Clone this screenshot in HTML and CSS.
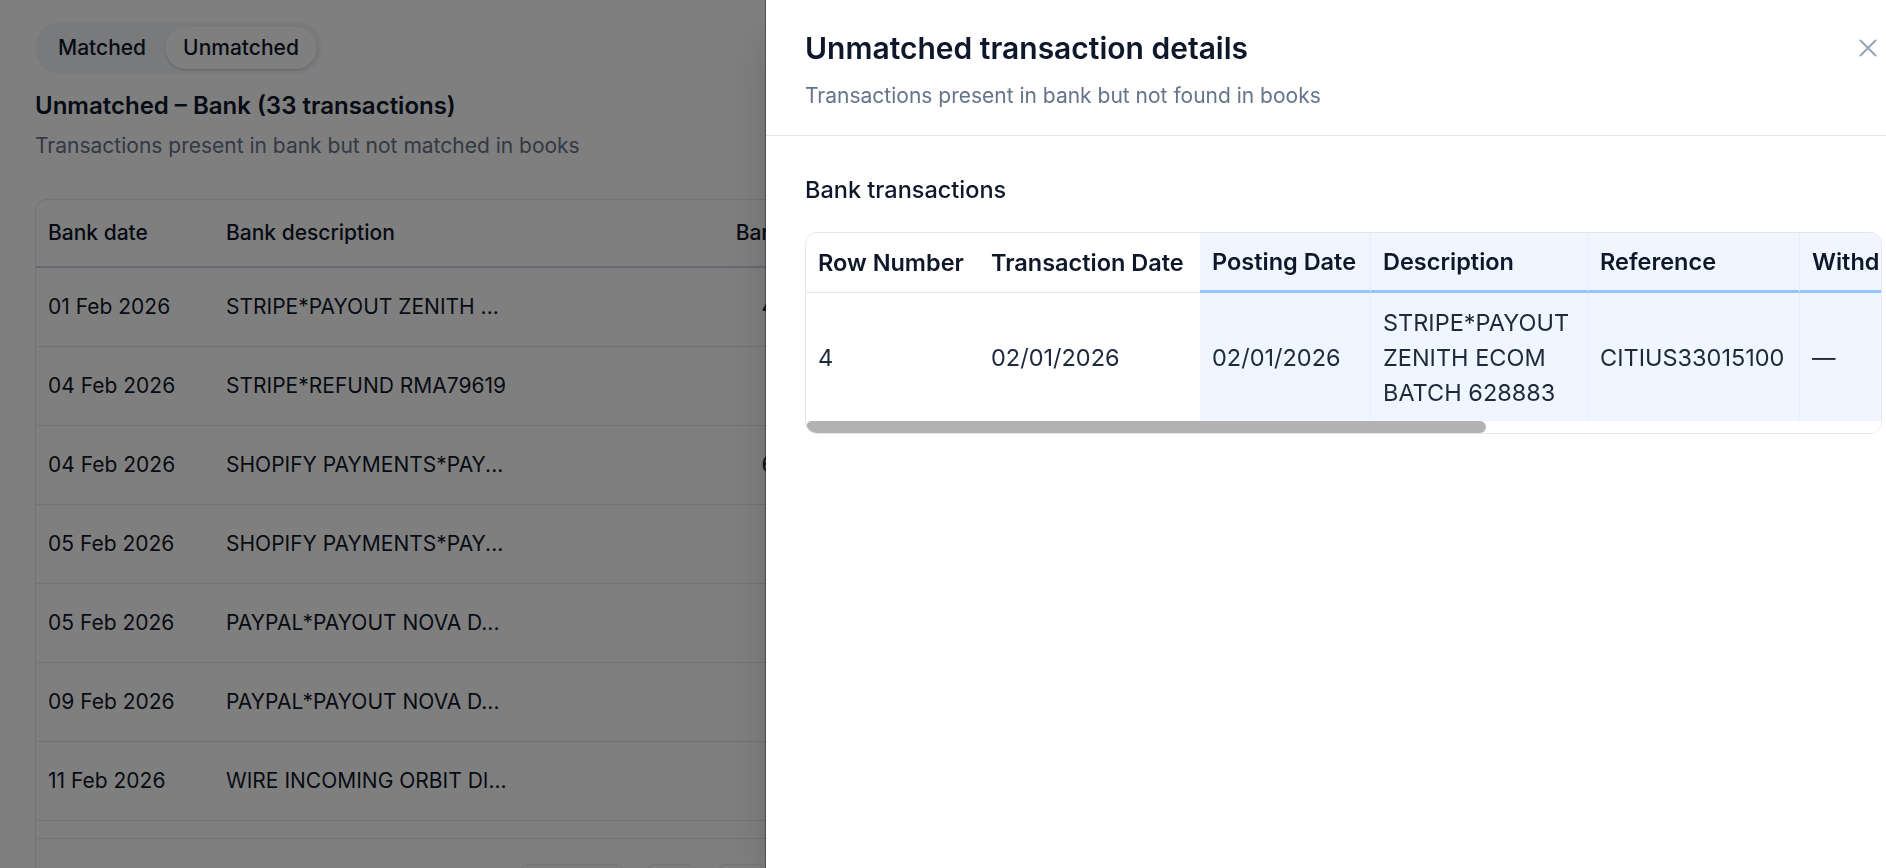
FILE: index.html
```html
<!DOCTYPE html>
<html lang="en">
<head>
<meta charset="utf-8">
<title>Reconciliation – Unmatched</title>
<link rel="stylesheet" href="styles.css">
</head>
<body>
<main class="page">
  <div class="toggle">
    <button class="toggle-btn">Matched</button>
    <button class="toggle-btn is-active">Unmatched</button>
  </div>
  <h2 class="section-title">Unmatched – Bank (33 transactions)</h2>
  <p class="section-sub">Transactions present in bank but not matched in books</p>

  <div class="card">
    <table class="list-table">
      <colgroup>
        <col class="c-date"><col class="c-desc"><col class="c-amt"><col class="c-rest"><col class="c-rest"><col class="c-rest">
      </colgroup>
      <thead>
        <tr><th>Bank date</th><th>Bank description</th><th class="num">Bank amount</th><th>Book date</th><th>Book description</th><th>Action</th></tr>
      </thead>
      <tbody>
        <tr><td>01 Feb 2026</td><td>STRIPE*PAYOUT ZENITH ...</td><td class="num amt">48,250.00</td><td>—</td><td>—</td><td>Match</td></tr>
        <tr><td>04 Feb 2026</td><td>STRIPE*REFUND RMA79619</td><td class="num amt">-850.00</td><td>—</td><td>—</td><td>Match</td></tr>
        <tr><td>04 Feb 2026</td><td>SHOPIFY PAYMENTS*PAY...</td><td class="num amt">63,480.50</td><td>—</td><td>—</td><td>Match</td></tr>
        <tr><td>05 Feb 2026</td><td>SHOPIFY PAYMENTS*PAY...</td><td class="num amt">3,420.75</td><td>—</td><td>—</td><td>Match</td></tr>
        <tr><td>05 Feb 2026</td><td>PAYPAL*PAYOUT NOVA D...</td><td class="num amt">2,150.00</td><td>—</td><td>—</td><td>Match</td></tr>
        <tr><td>09 Feb 2026</td><td>PAYPAL*PAYOUT NOVA D...</td><td class="num amt">980.40</td><td>—</td><td>—</td><td>Match</td></tr>
        <tr><td>11 Feb 2026</td><td>WIRE INCOMING ORBIT DI...</td><td class="num amt">18,400.00</td><td>—</td><td>—</td><td>Match</td></tr>
      </tbody>
    </table>
    <div class="list-track"></div>
    <div class="list-footer">
      <span class="list-spacer"></span>
      <button class="pg-btn pg-wide" aria-label="Previous page"></button>
      <button class="pg-btn" aria-label="Page 1"></button>
      <button class="pg-btn" aria-label="Page 2"></button>
    </div>
  </div>
</main>

<div class="overlay"></div>

<aside class="panel">
  <header class="panel-head">
    <div class="panel-titles">
      <h1 class="panel-title">Unmatched transaction details</h1>
      <p class="panel-sub">Transactions present in bank but not found in books</p>
    </div>
    <button class="close-btn" aria-label="Close">
      <svg width="18" height="18" viewBox="0 0 18 18" fill="none" stroke="currentColor" stroke-width="1.9" stroke-linecap="round"><path d="M1.5 1.5 16.5 16.5M16.5 1.5 1.5 16.5"/></svg>
    </button>
  </header>
  <div class="panel-body">
    <h3 class="block-title">Bank transactions</h3>
    <div class="detail-card">
      <div class="detail-scroll">
        <table class="detail-table">
          <colgroup>
            <col class="d1"><col class="d2"><col class="d3"><col class="d4"><col class="d5"><col class="d6"><col class="d7"><col class="d8"><col class="d9">
          </colgroup>
          <thead>
            <tr>
              <th>Row Number</th>
              <th>Transaction Date</th>
              <th class="hl hl-first">Posting Date</th>
              <th class="hl">Description</th>
              <th class="hl">Reference</th>
              <th class="hl">Withdrawal</th>
              <th class="hl">Deposit</th>
              <th>Balance</th>
              <th>Currency</th>
            </tr>
          </thead>
          <tbody>
            <tr>
              <td>4</td>
              <td>02/01/2026</td>
              <td class="hl hl-first">02/01/2026</td>
              <td class="hl wrap">STRIPE*PAYOUT ZENITH ECOM BATCH 628883</td>
              <td class="hl">CITIUS33015100</td>
              <td class="hl">—</td>
              <td class="hl">45,210.00</td>
              <td>182,340.12</td>
              <td>USD</td>
            </tr>
          </tbody>
        </table>
      </div>
      <div class="hscroll"><div class="hscroll-thumb"></div></div>
    </div>
  </div>
</aside>
</body>
</html>
```
FILE: styles.css
```css
html, body {
  margin: 0;
  height: 100%;
  overflow: hidden;
  background: #ffffff;
}
body {
  font-family: Inter, "Noto Sans", sans-serif;
  color: #0f172a;
}
button {
  font-family: inherit;
  border: 0;
  background: none;
  cursor: pointer;
}
h1, h2, h3, p { margin: 0; }

/* ---------- page underneath ---------- */
.page {
  padding: 22px 35px 0;
}
.toggle {
  display: inline-flex;
  gap: 1px;
  padding: 5px;
  background: #f1f5f9;
  border-radius: 26px;
}
.toggle-btn {
  font-size: 21px;
  font-weight: 500;
  line-height: 30px;
  padding: 6px 18px;
  border-radius: 999px;
  color: #0f172a;
}
.toggle-btn.is-active {
  background: #ffffff;
  box-shadow: 0 1px 3px rgba(15, 23, 42, 0.12), 0 1px 2px rgba(15, 23, 42, 0.08);
}
.section-title {
  margin-top: 16px;
  font-size: 24px;
  line-height: 32px;
  font-weight: 600;
  color: #0f172a;
}
.section-sub {
  margin-top: 9px;
  font-size: 21px;
  line-height: 30px;
  color: #64748b;
}
.card {
  margin-top: 38px;
  border: 1px solid #e5e7eb;
  border-radius: 12px;
  overflow: hidden;
  background: #ffffff;
}
.list-table {
  width: 100%;
  border-collapse: collapse;
  table-layout: fixed;
  font-size: 21px;
  line-height: 30px;
}
.c-date { width: 178px; }
.c-desc { width: 490px; }
.c-amt { width: 175px; }
.list-table th {
  text-align: left;
  font-weight: 500;
  padding: 18px 12px;
  border-bottom: 2px solid #cbd5e1;
  color: #0f172a;
  white-space: nowrap;
}
.list-table td {
  padding: 24px 12px;
  border-bottom: 1px solid #e5e7eb;
  color: #0f172a;
  white-space: nowrap;
  overflow: hidden;
}
.list-table .num { text-align: right; }
.list-table td.amt { padding-right: 15px; }
.list-track {
  height: 17px;
  border-bottom: 1px solid #e5e7eb;
}
.list-footer {
  display: flex;
  align-items: flex-start;
  gap: 22px;
  padding: 25px 12px;
}
.list-spacer {
  width: 450px;
}
.pg-btn {
  height: 40px;
  width: 49px;
  border: 1px solid #e5e7eb;
  border-radius: 8px;
  background: #ffffff;
}
.pg-wide { width: 104px; }

/* ---------- overlay & drawer ---------- */
.overlay {
  position: fixed;
  inset: 0;
  background: rgba(0, 0, 0, 0.5);
}
.panel {
  position: fixed;
  top: 0;
  bottom: 0;
  left: 766px;
  width: 1156px;
  background: #ffffff;
  box-shadow: -1px 0 0 rgba(0, 0, 0, 0.35), 0 25px 50px -12px rgba(0, 0, 0, 0.25);
}
.panel-head {
  display: flex;
  justify-content: space-between;
  align-items: flex-start;
  padding: 30px 40px 24px 39px;
  border-bottom: 1px solid #e5e7eb;
}
.panel-title {
  font-size: 30px;
  line-height: 36px;
  font-weight: 600;
  color: #0f172a;
}
.panel-sub {
  margin-top: 15px;
  font-size: 21px;
  line-height: 30px;
  color: #64748b;
}
.close-btn {
  margin-top: 4px;
  width: 28px;
  height: 28px;
  padding: 5px;
  color: #94a3b8;
  display: flex;
}
.panel-body {
  padding: 36px 40px 0 39px;
}
.block-title {
  font-size: 23.5px;
  line-height: 35px;
  font-weight: 500;
  color: #0f172a;
}
.detail-card {
  margin-top: 25px;
  border: 1px solid #e5e7eb;
  border-radius: 12px;
  overflow: hidden;
}
.detail-scroll {
  overflow: hidden;
}
.detail-table {
  width: 1700px;
  table-layout: fixed;
  border-collapse: separate;
  border-spacing: 0;
  font-size: 23.5px;
  line-height: 35px;
}
.d1 { width: 173px; }
.d2 { width: 221px; }
.d3 { width: 170px; }
.d4 { width: 217px; }
.d5 { width: 212px; }
.d6 { width: 180px; }
.d7 { width: 160px; }
.d8 { width: 170px; }
.d9 { width: 197px; }
.detail-table th {
  text-align: left;
  font-weight: 600;
  padding: 11px 12px;
  color: #0f172a;
  white-space: nowrap;
  border-bottom: 1px solid #e5e7eb;
}
.detail-table th.hl {
  border-bottom: 3px solid #93c5fd;
}
.detail-table td {
  padding: 12px 12px 11px;
  color: #1e293b;
  white-space: nowrap;
  vertical-align: middle;
}
.detail-table td.wrap {
  white-space: normal;
}
.detail-table .hl {
  background: #eff6ff;
  border-left: 1px solid #e6effc;
}
.detail-table .hl-first {
  border-left: 0;
}
.hscroll {
  height: 12px;
  background: #ffffff;
}
.hscroll-thumb {
  width: 680px;
  height: 12px;
  border-radius: 6px;
  background: #b2b2b2;
}
```
